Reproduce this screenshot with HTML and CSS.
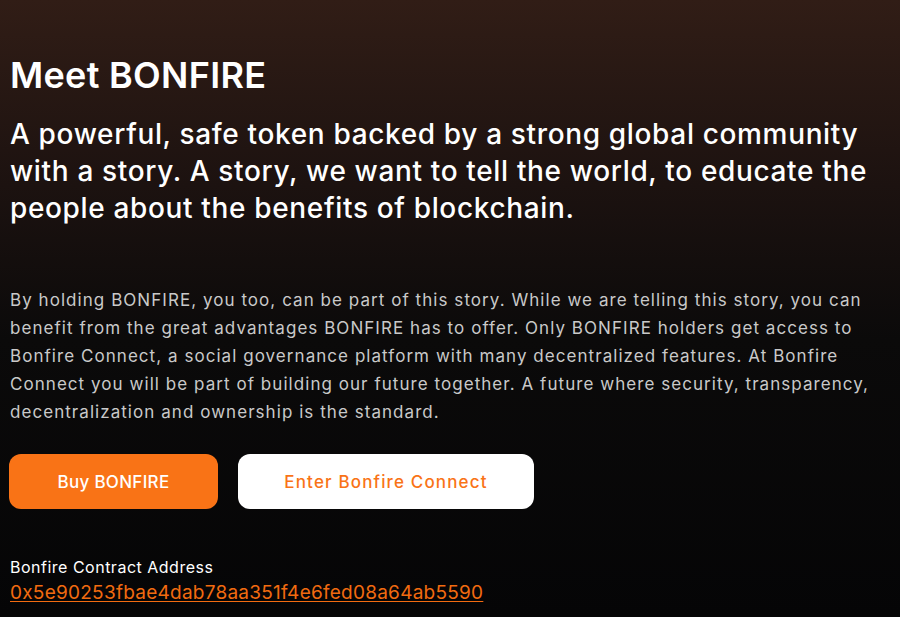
FILE: index.html
```html
<!DOCTYPE html>
<html lang="en">
<head>
<meta charset="utf-8">
<title>Meet BONFIRE</title>
<link rel="stylesheet" href="styles.css">
</head>
<body>
<main class="hero">
  <h1 class="title">Meet BONFIRE</h1>
  <h2 class="lead">A powerful, safe token backed by a strong global community with a story. A story, we want to tell the world, to educate the people about the benefits of blockchain.</h2>
  <p class="body-text">By holding BONFIRE, you too, can be part of this story. While we are telling this story, you can benefit from the great advantages BONFIRE has to offer. Only BONFIRE holders get access to Bonfire Connect, a social governance platform with many decentralized features. At Bonfire Connect you will be part of building our future together. A future where security, transparency, decentralization and ownership is the standard.</p>
  <div class="actions">
    <a class="btn btn-primary" href="#">Buy BONFIRE</a>
    <a class="btn btn-light" href="#">Enter Bonfire Connect</a>
  </div>
  <div class="contract">
    <div class="contract-label">Bonfire Contract Address</div>
    <a class="contract-link" href="#">0x5e90253fbae4dab78aa351f4e6fed08a64ab5590</a>
  </div>
</main>
</body>
</html>
```
FILE: styles.css
```css
html, body {
  margin: 0;
  padding: 0;
  height: 100%;
}
body {
  background: linear-gradient(to bottom, #311d16 0%, #1c1210 30%, #0b0a0a 55%, #050506 100%);
  color: #ffffff;
  font-family: "Inter", "Open Sans", sans-serif;
  min-height: 617px;
}
.hero {
  padding: 53px 0 0 10px;
  width: 900px;
  box-sizing: border-box;
}
.title {
  margin: 0;
  font-size: 36px;
  line-height: 44px;
  font-weight: 600;
  letter-spacing: 0.3px;
}
.lead {
  margin: 19px 0 0 0;
  font-size: 28px;
  line-height: 37px;
  font-weight: 500;
  letter-spacing: 0.65px;
  width: 875px;
}
.body-text {
  margin: 59px 0 0 0;
  font-size: 17px;
  line-height: 28px;
  color: #c9c9c9;
  letter-spacing: 1.05px;
  width: 886px;
}
.actions {
  display: flex;
  gap: 20px;
  margin-top: 28px;
}
.btn {
  display: flex;
  align-items: center;
  justify-content: center;
  height: 55px;
  border-radius: 12px;
  font-size: 17px;
  font-weight: 500;
  letter-spacing: 0.3px;
  text-decoration: none;
  box-sizing: border-box;
}
.btn-primary {
  width: 209px;
  margin-left: -1px;
  background: #f97316;
  color: #ffffff;
}
.btn-light {
  width: 296px;
  background: #ffffff;
  color: #f97316;
  letter-spacing: 1.15px;
}
.contract {
  margin-top: 47px;
}
.contract-label {
  font-size: 16px;
  line-height: 22px;
  letter-spacing: 0.5px;
  color: #ffffff;
}
.contract-link {
  display: inline-block;
  margin-top: 3px;
  font-size: 19px;
  line-height: 24px;
  letter-spacing: 0.25px;
  color: #f26b10;
  text-decoration: underline;
  text-underline-offset: 2px;
}
```
